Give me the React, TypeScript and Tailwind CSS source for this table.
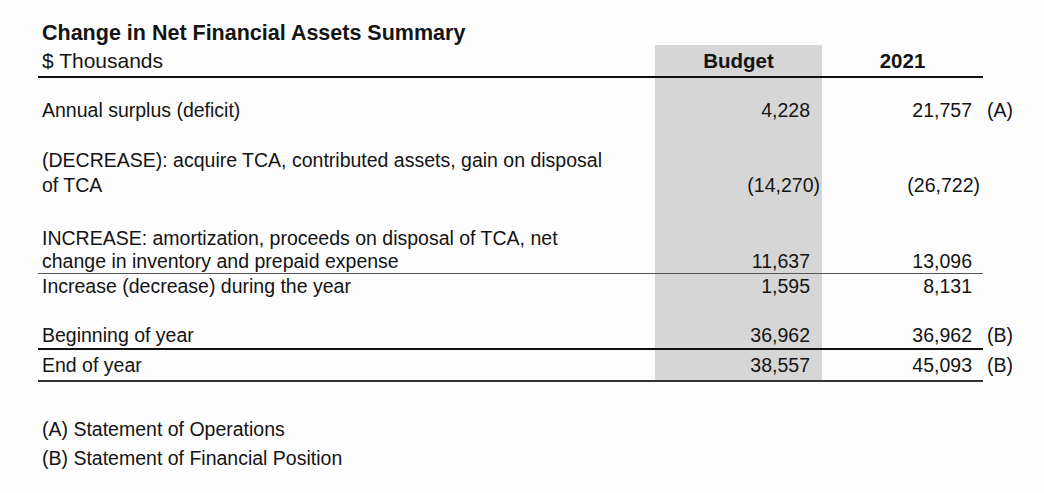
const font = { fontFamily: '"Liberation Sans", Arial, sans-serif' };

type Row = {
  label: string[];
  budget?: string;
  actual?: string;
  note?: string;
  pad: string;
  lead?: string;
  border?: string;
  noteBorder?: string;
  neg?: boolean;
};

const rows: Row[] = [
  { label: ["Annual surplus (deficit)"], budget: "4,228", actual: "21,757", note: "(A)", pad: "pt-[20px] pb-[25px]" },
  {
    label: ["(DECREASE): acquire TCA, contributed assets, gain on disposal", "of TCA"],
    budget: "(14,270)",
    actual: "(26,722)",
    neg: true,
    pad: "pb-[28px]",
  },
  {
    label: ["INCREASE: amortization, proceeds on disposal of TCA, net", "change in inventory and prepaid expense"],
    budget: "11,637",
    actual: "13,096",
    pad: "pt-[1px] pb-0",
    lead: "leading-[23px]",
    border: "border-b border-[#555]",
    noteBorder: "border-b border-transparent",
  },
  { label: ["Increase (decrease) during the year"], budget: "1,595", actual: "8,131", pad: "pb-[24px]" },
  {
    label: ["Beginning of year"],
    budget: "36,962",
    actual: "36,962",
    note: "(B)",
    pad: "pb-0",
    border: "border-b-2 border-[#111]",
    noteBorder: "border-b-2 border-transparent",
  },
  {
    label: ["End of year"],
    budget: "38,557",
    actual: "45,093",
    note: "(B)",
    pad: "pt-[3px] pb-[2px]",
    border: "border-b-2 border-[#333]",
    noteBorder: "border-b-2 border-transparent",
  },
];

function TableRow({ row }: { row: Row }) {
  return (
    <div className={`flex ${row.lead ?? ""}`}>
      <div className={`flex w-[945px] ${row.border ?? ""}`}>
        <div className={`flex-1 pl-[4px] ${row.pad}`}>
          {row.label.map((l) => (
            <div key={l}>{l}</div>
          ))}
        </div>
        <div className={`w-[167px] bg-[#d6d6d6] flex items-end justify-end ${row.neg ? "pr-[2px]" : "pr-[12px]"} ${row.pad}`}>
          {row.budget}
        </div>
        <div className={`w-[161px] flex items-end justify-end ${row.neg ? "pr-[3px]" : "pr-[11px]"} ${row.pad}`}>
          {row.actual}
        </div>
      </div>
      <div className={`w-[44px] flex items-end pl-[4px] ${row.pad} ${row.noteBorder ?? ""}`}>{row.note}</div>
    </div>
  );
}

export default function App() {
  return (
    <div className="w-[1044px] h-[493px] bg-[#fdfdfd] text-[#141414] overflow-hidden" style={font}>
      <div className="pl-[38px] pt-[22px] text-[19.5px] leading-[25px]">
        <div className="pl-[4px] font-bold text-[21.5px] leading-[23px]">Change in Net Financial Assets Summary</div>

        <div className="flex">
          <div className="flex w-[945px] h-[33px] border-b-2 border-[#111]">
            <div className="flex-1 pl-[4px] flex items-end pb-[3px] text-[21px]">$ Thousands</div>
            <div className="w-[167px] bg-[#d6d6d6] flex items-end justify-center pb-[3px] font-bold text-[20.5px]">
              Budget
            </div>
            <div className="w-[161px] flex items-end justify-center pb-[3px] font-bold text-[20.5px]">2021</div>
          </div>
        </div>

        {rows.map((r) => (
          <TableRow key={r.label[0]} row={r} />
        ))}

        <div className="pl-[4px] mt-[33px] leading-[29px]">
          <div>(A) Statement of Operations</div>
          <div>(B) Statement of Financial Position</div>
        </div>
      </div>
    </div>
  );
}
